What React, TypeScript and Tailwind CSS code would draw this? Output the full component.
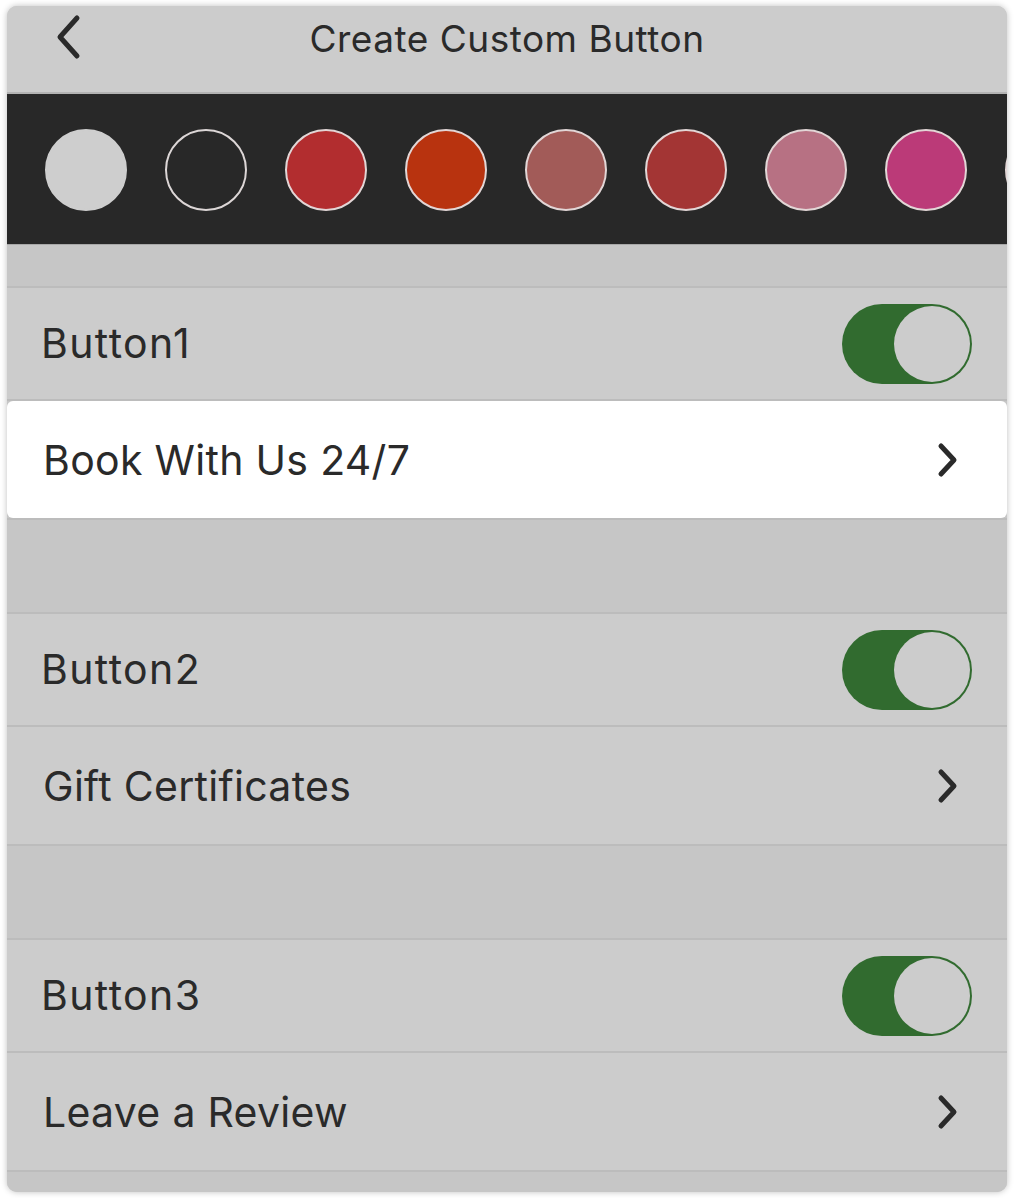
import React from "react";

const circles = [
  { fill: "#cecece", border: "#cecece" },
  { fill: "#282828", border: "#dcd6d6" },
  { fill: "#b22d2f", border: "#e2d6d6" },
  { fill: "#b8330f", border: "#e2d6d6" },
  { fill: "#a25b58", border: "#e2d6d6" },
  { fill: "#a33534", border: "#e2d6d6" },
  { fill: "#b77183", border: "#e2d6d6" },
  { fill: "#bb3a78", border: "#e2d6d6" },
  { fill: "#9a9a9a", border: "#e2d6d6" },
];

function Chevron() {
  return (
    <svg width="30" height="40" viewBox="0 0 30 40" className="shrink-0">
      <path d="M9 6 L22 20 L9 34" fill="none" stroke="#2a2a2a" strokeWidth="5" strokeLinecap="round" strokeLinejoin="round" />
    </svg>
  );
}

function Toggle() {
  return (
    <div className="relative w-[130px] h-[80px] rounded-full bg-[#316b2f] shrink-0">
      <div className="absolute right-[2px] top-[2px] w-[76px] h-[76px] rounded-full bg-[#cccccc]" />
    </div>
  );
}

function Section({ name, link, white, gap }: { name: string; link: string; white?: boolean; gap: string }) {
  return (
    <div>
      <div className={`${gap} bg-[#c6c6c6]`} />
      <div className="h-[2px] bg-[#bcbcbc]" />
      <div className="h-[111px] bg-[#cccccc] flex items-center justify-between pl-[34px] pr-[35px]">
        <span className="text-[41px] text-[#2a2a2a] tracking-[1.4px] mt-[1px]">{name}</span>
        <Toggle />
      </div>
      <div className="h-[2px] bg-[#bcbcbc]" />
      <div
        className={`h-[117px] flex items-center justify-between pl-[36px] pr-[45px] ${
          white ? "bg-white rounded-[6px]" : "bg-[#cccccc]"
        }`}
      >
        <span className="text-[41px] text-[#2a2a2a] tracking-[0.3px] mt-[3px]">{link}</span>
        <Chevron />
      </div>
      <div className="h-[2px] bg-[#bcbcbc]" />
    </div>
  );
}

export default function App() {
  return (
    <div className="w-[1015px] h-[1198px] bg-white pt-[6px] pl-[7px]" style={{ fontFamily: "Inter, 'Noto Sans', sans-serif" }}>
      <div className="w-[1000px] h-[1186px] rounded-[10px] overflow-hidden bg-[#c6c6c6] shadow-[0_0_6px_rgba(0,0,0,0.25)] flex flex-col">
        <div className="h-[86px] bg-[#cccccc] relative flex items-center justify-center">
          <svg width="40" height="50" viewBox="0 0 40 50" className="absolute left-[40px] top-[6px]">
            <path d="M30 6 L13 25 L30 44" fill="none" stroke="#2a2a2a" strokeWidth="5" strokeLinecap="round" strokeLinejoin="round" />
          </svg>
          <span className="text-[37px] text-[#2a2a2a] tracking-[0.5px] -mt-[20px]">Create Custom Button</span>
        </div>
        <div className="h-[2px] bg-[#b3b3b3]" />
        <div className="h-[150px] bg-[#282828] flex items-center gap-[38px] pl-[38px] pt-[2px] overflow-hidden">
          {circles.map((c, i) => (
            <div
              key={i}
              className="w-[82px] h-[82px] rounded-full shrink-0 border-[2.5px]"
              style={{ backgroundColor: c.fill, borderColor: c.border }}
            />
          ))}
        </div>
        <div className="h-[1px] bg-[#a8a8a8]" />
        <Section name="Button1" link="Book With Us 24/7" white gap="h-[41px]" />
        <Section name="Button2" link="Gift Certificates" gap="h-[92px]" />
        <Section name="Button3" link="Leave a Review" gap="h-[92px]" />
        <div className="flex-1 bg-[#c6c6c6]" />
      </div>
    </div>
  );
}
